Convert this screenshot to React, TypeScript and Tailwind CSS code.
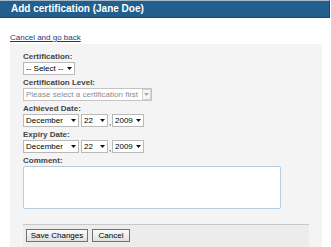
import React from 'react';

const months = ['January', 'February', 'March', 'April', 'May', 'June', 'July', 'August', 'September', 'October', 'November', 'December'];
const days = Array.from({ length: 31 }, (_, i) => String(i + 1));
const years = ['2008', '2009', '2010', '2011'];

const Arrow: React.FC<{ color?: string }> = ({ color = '#111' }) => (
  <svg width="5" height="3" viewBox="0 0 5 3">
    <path d="M0 0 H5 L2.5 3 Z" fill={color} />
  </svg>
);

interface DropdownProps {
  options: string[];
  value: string;
  width: string;
}

// plain select with a small triangle laid over its right end
const Dropdown: React.FC<DropdownProps> = ({ options, value, width }) => (
  <div className={`relative ${width} h-[13px]`}>
    <select
      defaultValue={value}
      className="block appearance-none w-full h-full border border-[#b9b9b9] bg-white pl-[2px] text-[8px] leading-[11px] text-black outline-none"
    >
      {options.map((o) => (
        <option key={o} value={o}>{o}</option>
      ))}
    </select>
    <span className="pointer-events-none absolute right-[3px] top-[5px] flex">
      <Arrow />
    </span>
  </div>
);

const DateRow: React.FC = () => (
  <div className="flex items-end">
    <Dropdown options={months} value="December" width="w-[56px]" />
    <div className="w-[2px]" />
    <Dropdown options={days} value="22" width="w-[27px]" />
    <span className="w-[4px] text-center text-[8px] leading-[9px] text-black">,</span>
    <Dropdown options={years} value="2009" width="w-[32px]" />
  </div>
);

const Label: React.FC<{ children: React.ReactNode }> = ({ children }) => (
  <label className="block text-[8px] leading-[11px] font-bold text-[#444]">{children}</label>
);

export default function App() {
  return (
    <div className="w-[331px] h-[247px] overflow-hidden bg-white font-['Liberation_Sans',Arial,sans-serif]">
      {/* Title bar */}
      <div className="w-[330px] h-[18px] flex items-center pl-[11px] bg-[#235f8e] border-t border-t-[#a9b8c6] border-b border-b-[#174a70] border-r border-r-[#174a70]">
        <h1 className="text-[10px] font-bold text-white leading-none">Add certification (Jane Doe)</h1>
      </div>

      <div className="pl-[10px] pt-[5px] h-[26px]">
        <a href="#" className="text-[8px] leading-[11px] text-[#1d3a74] underline">Cancel and go back</a>
      </div>

      {/* Form panel */}
      <div className="ml-[10px] w-[312px] h-[203px] bg-[#f4f4f4] pt-[7px] px-[13px]">
        <div className="flex flex-col gap-[2px]">
          <div>
            <Label>Certification:</Label>
            <Dropdown options={['-- Select --']} value="-- Select --" width="w-[52px]" />
          </div>

          <div>
            <Label>Certification Level:</Label>
            <div className="relative w-[129px] h-[13px]">
              <select
                disabled
                className="block appearance-none w-full h-full border border-[#c4c4c4] bg-white pl-[2px] text-[8px] leading-[11px] text-[#8c8c8c]"
              >
                <option>Please select a certification first</option>
              </select>
              <span className="pointer-events-none absolute right-[1px] top-[1px] w-[9px] h-[11px] flex items-center justify-center border border-[#d2d2d2] bg-[#f6f6f6]">
                <Arrow color="#a8a8a8" />
              </span>
            </div>
          </div>

          <div>
            <Label>Achieved Date:</Label>
            <DateRow />
          </div>

          <div>
            <Label>Expiry Date:</Label>
            <DateRow />
          </div>

          <div>
            <Label>Comment:</Label>
            <textarea className="block w-[258px] h-[43px] resize-none rounded-[2px] border border-[#b4cde1] bg-white outline-none" />
          </div>
        </div>

        <div className="mt-[15px] w-[286px] h-[30px] border-t border-[#c8c8c8] bg-[#ececec] pt-[4px] pl-[3px] flex items-start gap-[4px]">
          <button className="w-[62px] h-[13px] border border-[#727272] bg-linear-to-b from-[#fbfbfb] to-[#e0e0e0] text-[8px] leading-[11px] text-black">
            Save Changes
          </button>
          <button className="w-[38px] h-[13px] border border-[#727272] bg-linear-to-b from-[#fbfbfb] to-[#e0e0e0] text-[8px] leading-[11px] text-black">
            Cancel
          </button>
        </div>
      </div>
    </div>
  );
}
